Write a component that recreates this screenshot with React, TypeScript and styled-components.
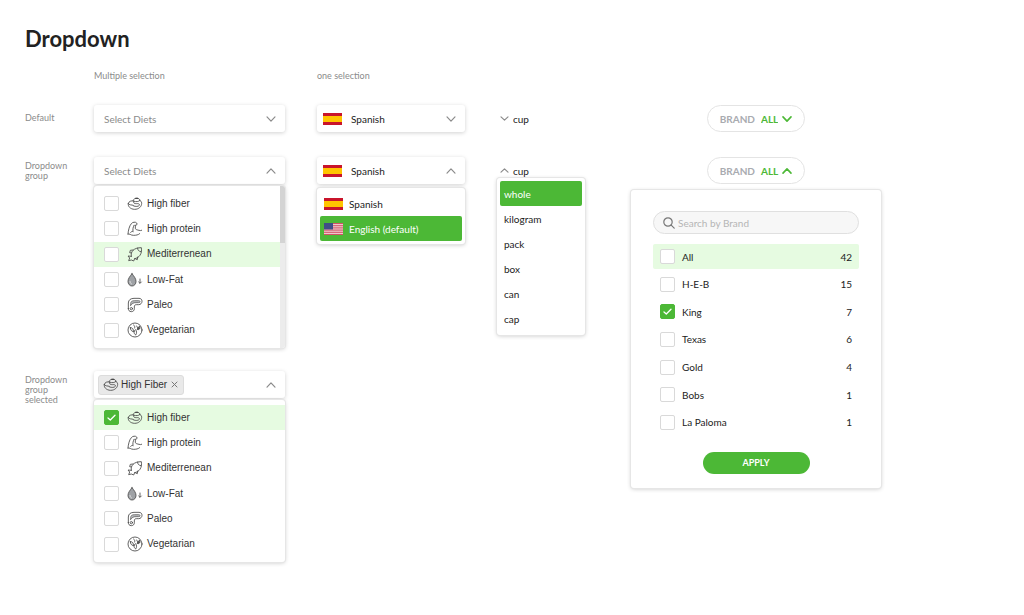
import React from "react";
import styled, { createGlobalStyle, css } from "styled-components";

const green = "#4cb836";
const mint = "#e6fbe1";
const ink = "#333333";
const muted = "#8b8b8b";
const brandFont = `Lato, "Liberation Sans", sans-serif`;
const listFont = `"Liberation Sans", Arial, sans-serif`;

const GlobalStyle = createGlobalStyle`
  *, *::before, *::after { box-sizing: border-box; }
  body {
    margin: 0;
    background: #ffffff;
    color: ${ink};
    font-family: ${brandFont};
    font-size: 10px;
    line-height: 12px;
  }
  button, input, select { font: inherit; color: inherit; margin: 0; }
`;

const Page = styled.main`
  padding: 25px 143px 25px 25px;
`;

const Title = styled.h1`
  margin: 0 0 16px;
  font-size: 22px;
  line-height: 28px;
  font-weight: 700;
  color: #222222;
`;

const Board = styled.div`
  display: grid;
  grid-template-columns: 37px minmax(0, 191fr) minmax(0, 148fr) minmax(0, 88fr) minmax(0, 264fr);
  grid-template-rows: 13px 29px auto auto;
  column-gap: 32px;
  row-gap: 23px;
  align-items: start;
`;

const Caption = styled.p<{ $column: number }>`
  grid-column: ${(p) => p.$column};
  margin: 0;
  font-size: 9px;
  line-height: 14px;
  color: ${muted};
`;

const RowLabel = styled.h2<{ $single?: boolean }>`
  grid-column: 1;
  margin: 0;
  padding-top: ${(p) => (p.$single ? 8 : 4)}px;
  font-size: 9px;
  line-height: 10px;
  font-weight: 400;
  color: ${muted};
`;

const Cell = styled.div<{ $column: number }>`
  grid-column: ${(p) => p.$column};
  display: flex;
  flex-direction: column;
`;

const Field = styled.div`
  display: flex;
  align-items: center;
  height: 27px;
  padding: 0 9px 0 10px;
  background: #ffffff;
  border-radius: 3px;
  box-shadow: 0 1px 4px rgba(0, 0, 0, 0.18);
`;

const SmallField = styled(Field)`
  padding: 0 9px 0 6px;
  gap: 9px;
`;

const control = css`
  flex: 1;
  min-width: 0;
  padding: 0;
  border: 0;
  background: none;
  appearance: none;
  text-align: left;
  cursor: pointer;
`;

const FieldButton = styled.button<{ $placeholder?: boolean }>`
  ${control}
  color: ${(p) => (p.$placeholder ? muted : "#222222")};
`;

const FieldSelect = styled.select`
  ${control}
  color: #222222;
`;

const floating = css`
  background: #ffffff;
  border-radius: 3px;
  box-shadow: 0 0 0 1px #e6e6e6, 0 1px 4px rgba(0, 0, 0, 0.22);
`;

const Panel = styled.div`
  ${floating}
  display: flex;
  margin-top: 2px;
  height: 162px;
  overflow: hidden;
`;

const List = styled.ul`
  list-style: none;
  margin: 0;
  padding: 0;
`;

const DietList = styled(List)`
  flex: 1;
  display: grid;
  grid-auto-rows: 1fr;
  padding: 5px 0;
`;

const DietRow = styled.li<{ $active?: boolean }>`
  display: flex;
  background: ${(p) => (p.$active ? mint : "transparent")};
`;

const DietLabel = styled.label`
  flex: 1;
  display: flex;
  align-items: center;
  padding-left: 10px;
  font-family: ${listFont};
  cursor: pointer;
  & > svg { margin: 0 4px 0 8px; }
`;

const Track = styled.div`
  width: 5px;
  background: #ececec;
`;

const Thumb = styled.div`
  height: 57px;
  background: #d4d4d4;
`;

const BoxWrap = styled.span`
  display: grid;
  place-items: center;
  & > * { grid-area: 1 / 1; }
`;

const Box = styled.input`
  appearance: none;
  width: 15px;
  height: 15px;
  border: 1px solid #d9d9d9;
  border-radius: 2px;
  background: #ffffff;
  &:checked { background: ${green}; border-color: ${green}; }
  & + svg { visibility: hidden; pointer-events: none; }
  &:checked + svg { visibility: visible; }
`;

const Chip = styled.span`
  display: flex;
  align-items: center;
  height: 20px;
  margin-left: -6px;
  padding: 0 5px 0 4px;
  border: 1px solid #dcdcdc;
  border-radius: 3px;
  background: #e9e9e9;
  font-family: ${listFont};
  & > svg { margin-right: 2px; }
`;

const ChipClose = styled.button`
  display: flex;
  margin-left: 4px;
  padding: 0;
  border: 0;
  background: none;
  cursor: pointer;
`;

const Toggle = styled.button`
  display: flex;
  margin-left: auto;
  padding: 0;
  border: 0;
  background: none;
  cursor: pointer;
`;

const Menu = styled(List)`
  ${floating}
  margin-top: 4px;
  padding: 3px;
`;

const UnitMenu = styled(Menu)`
  display: grid;
  grid-auto-rows: 1fr;
  height: 157px;
  margin-top: 0;
`;

const Option = styled.li<{ $active?: boolean }>`
  display: flex;
  align-items: center;
  min-height: 25px;
  padding-left: 4px;
  gap: 6px;
  border-radius: 2px;
  color: ${(p) => (p.$active ? "#ffffff" : "#222222")};
  background: ${(p) => (p.$active ? green : "transparent")};
  cursor: pointer;
`;

const UnitTrigger = styled.div`
  display: flex;
  align-items: center;
  gap: 4px;
  height: 15px;
  margin-top: 6px;
  padding-left: 3px;
`;

const BrandCell = styled(Cell)<{ $tall?: boolean }>`
  grid-row: ${(p) => (p.$tall ? "span 2" : "auto")};
  padding-left: 14px;
  align-items: center;
`;

const Pill = styled.div`
  display: flex;
  align-items: center;
  gap: 6px;
  height: 27px;
  padding: 0 12px;
  border: 1px solid #e4e4e4;
  border-radius: 14px;
  background: #ffffff;
  font-weight: 700;
  color: #a9abb0;
`;

const PillSelect = styled.select`
  ${control}
  field-sizing: content;
  color: ${green};
`;

const PillButton = styled.button`
  ${control}
  color: ${green};
`;

const PillArrow = styled.span`
  display: flex;
  margin-left: -2px;
`;

const BrandPanel = styled.form`
  ${floating}
  width: 100%;
  display: flex;
  flex-direction: column;
  align-items: center;
  margin-top: 6px;
  padding: 21px 22px 14px;
`;

const Search = styled.label`
  width: 100%;
  display: flex;
  align-items: center;
  gap: 3px;
  height: 23px;
  padding: 0 9px;
  border: 1px solid #e0e0e0;
  border-radius: 12px;
  background: #f7f7f7;
`;

const SearchInput = styled.input`
  flex: 1;
  min-width: 0;
  padding: 0;
  border: 0;
  outline: 0;
  background: none;
  &::placeholder { color: #b5b5b5; opacity: 1; }
`;

const BrandList = styled(List)`
  width: 100%;
  display: flex;
  flex-direction: column;
  justify-content: space-between;
  height: 191px;
  margin: 10px 0 17px;
`;

const BrandRow = styled.li<{ $active?: boolean }>`
  height: 25px;
  display: flex;
  border-radius: 2px;
  background: ${(p) => (p.$active ? mint : "transparent")};
`;

const BrandLabel = styled.label`
  flex: 1;
  display: flex;
  align-items: center;
  gap: 7px;
  padding: 0 7px;
  color: #222222;
  cursor: pointer;
`;

const Count = styled.span`
  margin-left: auto;
`;

const Apply = styled.button`
  width: 107px;
  height: 22px;
  padding: 0;
  border: 0;
  border-radius: 11px;
  background: ${green};
  color: #ffffff;
  font-size: 9px;
  font-weight: 700;
  cursor: pointer;
`;

function Chevron({ up, small, color = "#8b8b8b", weight = 1.2 }: { up?: boolean; small?: boolean; color?: string; weight?: number }) {
  const size = small ? 9 : 10;
  const rise = small ? 1.6 : 2.1;
  const mid = size / 2;
  const ends = up ? mid + rise : mid - rise;
  const tip = up ? mid - rise : mid + rise;
  return (
    <svg width={size} height={size} viewBox={`0 0 ${size} ${size}`} fill="none" stroke={color} strokeWidth={weight} strokeLinecap="round" strokeLinejoin="round" aria-hidden>
      <path d={`M1 ${ends}L${mid} ${tip}L${size - 1} ${ends}`} />
    </svg>
  );
}

function SpainFlag() {
  return (
    <svg width="19" height="12" viewBox="0 0 19 12" aria-hidden>
      <rect width="19" height="12" fill="#c9142b" />
      <rect y="3" width="19" height="6" fill="#ffc400" />
    </svg>
  );
}

function UsaFlag() {
  return (
    <svg width="19" height="12" viewBox="0 0 19 13" preserveAspectRatio="none" aria-hidden>
      <rect width="19" height="13" fill="#f3dfe1" />
      {[0, 2, 4, 6, 8, 10, 12].map((y) => (
        <rect key={y} y={y} width="19" height="1" fill="#d0455a" />
      ))}
      <rect width="9" height="7" fill="#3f4f86" />
    </svg>
  );
}

function Glyph({ children }: { children: React.ReactNode }) {
  return (
    <svg width="16" height="16" viewBox="0 0 48 48" fill="none" stroke="#4a4a4a" strokeWidth="2.6" strokeLinecap="round" strokeLinejoin="round" aria-hidden>
      {children}
    </svg>
  );
}

const glyphs = {
  fiber: (
    <Glyph>
      <path d="M4 22c-3 8 6 18 19 18 12 0 21-8 21-18 0-5-3-8-7-10" />
      <path d="M4 22c1-6 9-9 16-7" />
      <path d="M18 14c1-5 7-8 13-7 4 0 7 2 8 6-4 4-12 5-17 3" />
      <path d="M20 16c-2 6 3 7 9 7 6-1 10 2 8 5-3 4-11 4-17 2" />
      <path d="M4 23c3 5 9 3 15 5" />
      <path d="M26 7l6 0" strokeWidth="4" />
    </Glyph>
  ),
  protein: (
    <Glyph>
      <path d="M3 39C4 27 7 15 13 8c3-5 13-6 16-2 3 4 0 8-5 7" />
      <path d="M21 13c-3 6-4 12-3 18" />
      <path d="M25 14v8c0 4 7 5 11 6 3 1 6 1 8 0" />
      <path d="M18 32c-2-2-5 0-7 2" />
      <path d="M3 39c5-2 8 4 16 4s15-1 19-5" />
    </Glyph>
  ),
  fish: (
    <Glyph>
      <path d="M13 31C10 18 19 5 43 5c3 18-6 31-20 33" />
      <path d="M13 31L3 30l5 6-3 8 8-2 7 3 3-7" />
      <path d="M18 12l-8 1-2 7 5 1M32 33l-1 8-5-2" />
      <path d="M32 6c-1 6 3 10 10 11" />
    </Glyph>
  ),
  drop: (
    <Glyph>
      <path d="M15 5C9 13 3 20 3 28c0 8 5 14 12 14s12-6 12-14C27 20 21 13 15 5z" fill="#9fa2a6" />
      <path d="M9 28c0 5 2 7 5 8" stroke="#e4e4e4" />
      <path d="M39 21v12M35 30l4 4 4-4" />
    </Glyph>
  ),
  meat: (
    <Glyph>
      <path d="M4 35V18C4 9 11 4 21 4h15c6 0 9 4 9 9s-4 10-10 10h-7c-5 0-6 3-6 7v5c0 5-3 9-9 9s-9-4-9-9z" />
      <path d="M11 25v-5c0-6 4-9 11-9h13c3 0 4 1 4 3s-1 3-4 3h-8c-7 0-12 2-16 8z" fill="#b9bbbe" strokeWidth="2" />
      <circle cx="13" cy="35" r="3.5" />
    </Glyph>
  ),
  veg: (
    <Glyph>
      <circle cx="24" cy="24" r="21" />
      <path d="M10 17c7-1 10 5 9 12-5-1-9-5-9-12zM21 29c0 5 2 8 5 10 4-5 3-12 0-16-3 1-4 3-5 6z" />
      <path d="M20 9c3 2 4 5 3 9" />
      <path d="M29 12l4 8M37 13l-7 9c4 2 7 1 9-3z" fill="#555555" />
    </Glyph>
  ),
};

const diets: { name: string; icon: keyof typeof glyphs }[] = [
  { name: "High fiber", icon: "fiber" },
  { name: "High protein", icon: "protein" },
  { name: "Mediterrenean", icon: "fish" },
  { name: "Low-Fat", icon: "drop" },
  { name: "Paleo", icon: "meat" },
  { name: "Vegetarian", icon: "veg" },
];

const units = ["whole", "kilogram", "pack", "box", "can", "cap"];

const brands = [
  { name: "All", count: 42 },
  { name: "H-E-B", count: 15 },
  { name: "King", count: 7 },
  { name: "Texas", count: 6 },
  { name: "Gold", count: 4 },
  { name: "Bobs", count: 1 },
  { name: "La Paloma", count: 1 },
];

function Checkbox({ checked }: { checked?: boolean }) {
  return (
    <BoxWrap>
      <Box type="checkbox" defaultChecked={checked} />
      <svg width="9" height="9" viewBox="0 0 9 9" fill="none" stroke="#ffffff" strokeWidth="1.3" strokeLinecap="round" strokeLinejoin="round" aria-hidden>
        <path d="M1 5l2.3 2L8 2.2" />
      </svg>
    </BoxWrap>
  );
}

function DietPanel({ active, checked, scroll }: { active: string; checked?: string; scroll?: boolean }) {
  return (
    <Panel>
      <DietList>
        {diets.map((d) => (
          <DietRow key={d.name} $active={d.name === active}>
            <DietLabel>
              <Checkbox checked={d.name === checked} />
              {glyphs[d.icon]}
              {d.name}
            </DietLabel>
          </DietRow>
        ))}
      </DietList>
      {scroll && (
        <Track>
          <Thumb />
        </Track>
      )}
    </Panel>
  );
}

export default function App() {
  return (
    <>
      <GlobalStyle />
      <Page>
        <Title>Dropdown</Title>
        <Board>
          <Caption $column={2}>Multiple selection</Caption>
          <Caption $column={3}>one selection</Caption>

          <RowLabel $single>Default</RowLabel>
          <Cell $column={2}>
            <Field>
              <FieldButton $placeholder aria-haspopup="listbox" aria-expanded="false">Select Diets</FieldButton>
              <Chevron />
            </Field>
          </Cell>
          <Cell $column={3}>
            <SmallField>
              <SpainFlag />
              <FieldSelect aria-label="Language" defaultValue="Spanish">
                <option>Spanish</option>
                <option>English (default)</option>
              </FieldSelect>
              <Chevron />
            </SmallField>
          </Cell>
          <Cell $column={4}>
            <UnitTrigger>
              <Chevron small />
              <FieldSelect aria-label="Unit" defaultValue="cup">
                <option>cup</option>
                {units.map((u) => (
                  <option key={u}>{u}</option>
                ))}
              </FieldSelect>
            </UnitTrigger>
          </Cell>
          <BrandCell $column={5}>
            <Pill>
              <label htmlFor="brand">BRAND</label>
              <PillSelect id="brand" defaultValue="ALL">
                <option>ALL</option>
              </PillSelect>
              <PillArrow>
                <Chevron color={green} weight={1.6} />
              </PillArrow>
            </Pill>
          </BrandCell>

          <RowLabel>Dropdown group</RowLabel>
          <Cell $column={2}>
            <Field>
              <FieldButton $placeholder aria-haspopup="listbox" aria-expanded="true">Select Diets</FieldButton>
              <Chevron up />
            </Field>
            <DietPanel active="Mediterrenean" scroll />
          </Cell>
          <Cell $column={3}>
            <SmallField>
              <SpainFlag />
              <FieldButton aria-haspopup="listbox" aria-expanded="true">Spanish</FieldButton>
              <Chevron up />
            </SmallField>
            <Menu role="listbox" aria-label="Language">
              <Option role="option" aria-selected="false">
                <SpainFlag />
                Spanish
              </Option>
              <Option role="option" aria-selected="true" $active>
                <UsaFlag />
                English (default)
              </Option>
            </Menu>
          </Cell>
          <Cell $column={4}>
            <UnitTrigger>
              <Chevron up small />
              <FieldButton aria-haspopup="listbox" aria-expanded="true">cup</FieldButton>
            </UnitTrigger>
            <UnitMenu role="listbox" aria-label="Unit">
              {units.map((u) => (
                <Option key={u} role="option" aria-selected={u === "whole"} $active={u === "whole"}>
                  {u}
                </Option>
              ))}
            </UnitMenu>
          </Cell>
          <BrandCell $column={5} $tall>
            <Pill>
              <span id="brand-open">BRAND</span>
              <PillButton aria-describedby="brand-open" aria-expanded="true">ALL</PillButton>
              <PillArrow>
                <Chevron up color={green} weight={1.6} />
              </PillArrow>
            </Pill>
            <BrandPanel onSubmit={(e) => e.preventDefault()}>
              <Search>
                <svg width="12" height="12" viewBox="0 0 12 12" fill="none" stroke="#777777" strokeWidth="1.2" strokeLinecap="round" aria-hidden>
                  <circle cx="5" cy="5" r="4.2" />
                  <path d="M8.2 8.2l3 3" />
                </svg>
                <SearchInput type="text" aria-label="Search by Brand" placeholder="Search by Brand" />
              </Search>
              <BrandList>
                {brands.map((b) => (
                  <BrandRow key={b.name} $active={b.name === "All"}>
                    <BrandLabel>
                      <Checkbox checked={b.name === "King"} />
                      {b.name}
                      <Count>{b.count}</Count>
                    </BrandLabel>
                  </BrandRow>
                ))}
              </BrandList>
              <Apply type="submit">APPLY</Apply>
            </BrandPanel>
          </BrandCell>

          <RowLabel>Dropdown group selected</RowLabel>
          <Cell $column={2}>
            <Field>
              <Chip>
                {glyphs.fiber}
                High Fiber
                <ChipClose aria-label="Remove High Fiber">
                  <svg width="7" height="7" viewBox="0 0 7 7" stroke="#777777" strokeWidth="1" strokeLinecap="round" aria-hidden>
                    <path d="M1 1l5 5M6 1l-5 5" />
                  </svg>
                </ChipClose>
              </Chip>
              <Toggle aria-label="Diets" aria-haspopup="listbox" aria-expanded="true">
                <Chevron up />
              </Toggle>
            </Field>
            <DietPanel active="High fiber" checked="High fiber" />
          </Cell>
        </Board>
      </Page>
    </>
  );
}
